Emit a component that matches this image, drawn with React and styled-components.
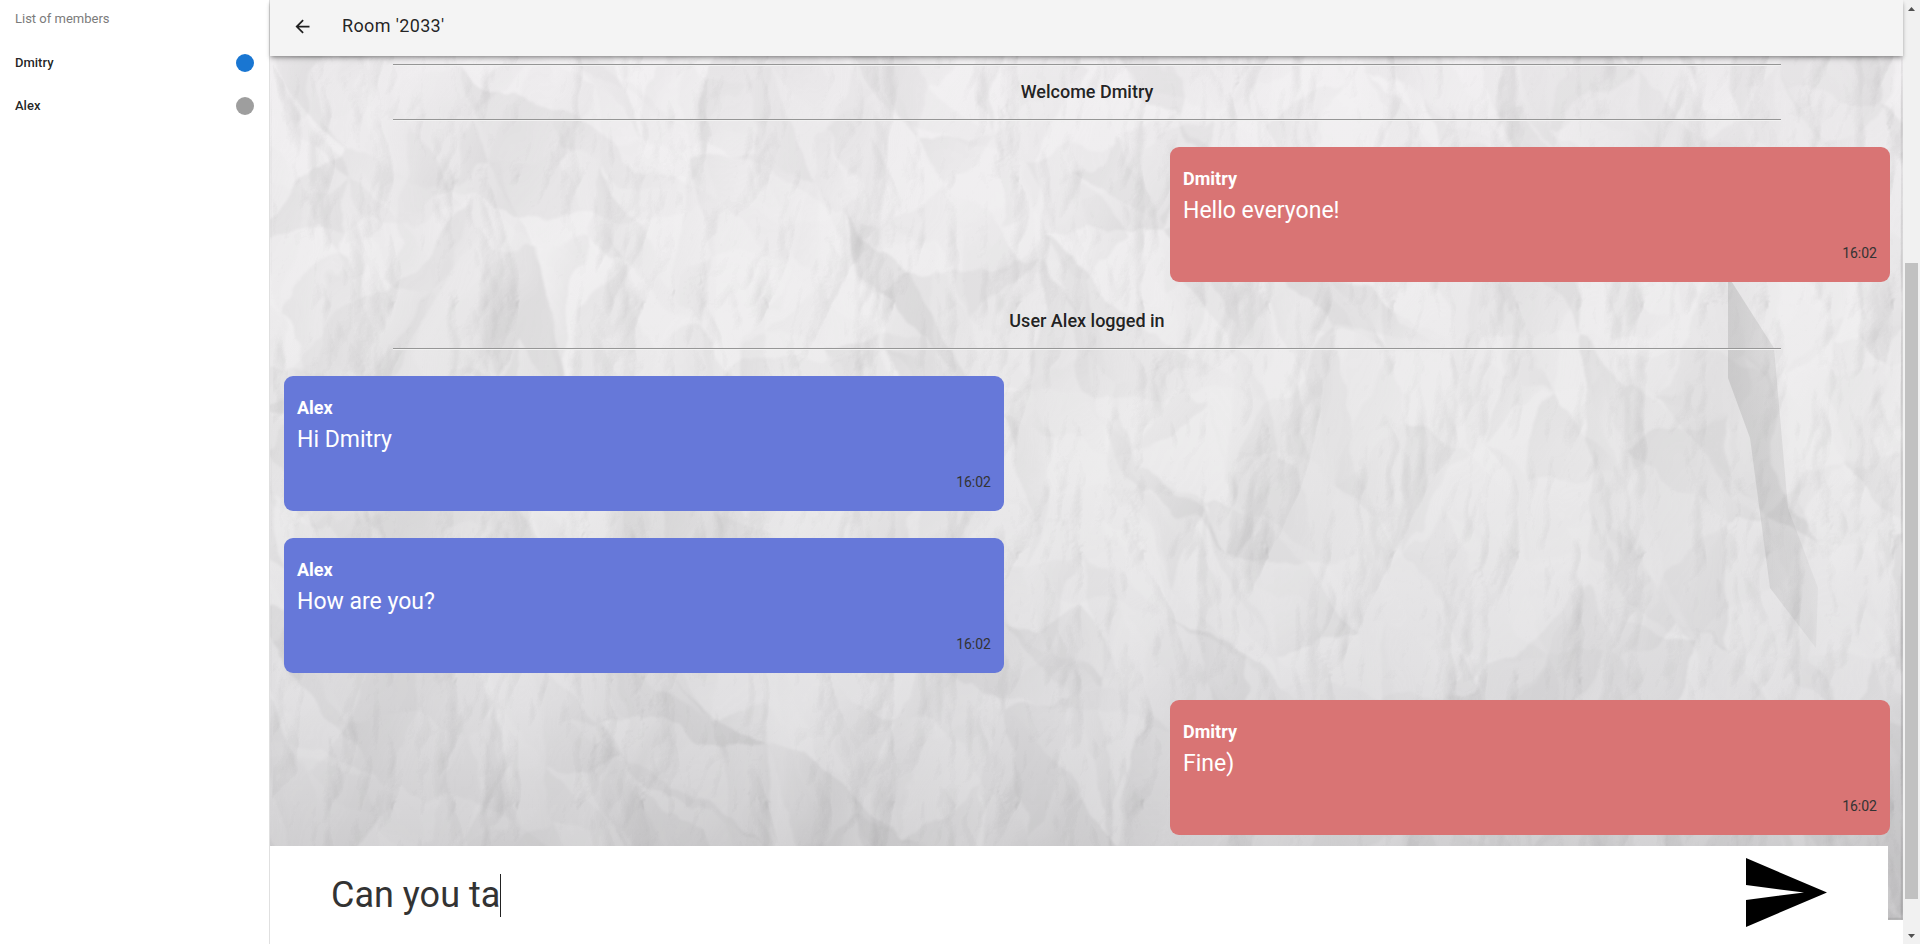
import React, { useState } from "react";
import styled, { createGlobalStyle } from "styled-components";

const GlobalStyle = createGlobalStyle`
  *, *::before, *::after { box-sizing: border-box; }
  body {
    margin: 0;
    background: #fff;
    color: rgba(0, 0, 0, 0.87);
    font-family: Roboto, "Liberation Sans", sans-serif;
  }
`;

const Shell = styled.div`
  display: grid;
  grid-template-columns: 270px minmax(0, 1fr) 17px;
  min-height: 100vh;
`;

const Sidebar = styled.aside`
  border-right: 1px solid #e0e0e0;
  padding: 9px 15px;
  font-size: 13px;
  line-height: 20px;
`;

const SidebarTitle = styled.h2`
  margin: 0 0 12px;
  font-size: inherit;
  font-weight: 400;
  color: #7b7b7b;
`;

const MemberList = styled.ul`
  list-style: none;
  margin: 0;
  padding: 0;
`;

const Member = styled.li`
  display: flex;
  align-items: center;
  justify-content: space-between;
  height: 43px;
  font-weight: 500;
`;

const Status = styled.span`
  width: 18px;
  height: 18px;
  border-radius: 50%;
  background: ${({ $online }) => ($online ? "#1976d2" : "#9e9e9e")};
`;

const Main = styled.main`
  position: relative;
  display: flex;
  flex-direction: column;
  padding-bottom: 24px;
`;

const Toolbar = styled.header`
  position: relative;
  z-index: 1;
  display: flex;
  align-items: center;
  gap: 20px;
  height: 56px;
  padding: 0 20px 4px;
  background: #f4f4f4;
  box-shadow: 0 2px 4px -1px rgba(0, 0, 0, 0.4), 0 4px 5px rgba(0, 0, 0, 0.1);
`;

const BackButton = styled.button`
  display: grid;
  place-items: center;
  width: 32px;
  height: 32px;
  padding: 0 8px 0 0;
  border: 0;
  background: none;
  color: inherit;
`;

const RoomTitle = styled.h1`
  margin: 0;
  font-size: 18px;
  line-height: 24px;
  font-weight: 400;
  letter-spacing: 0.02em;
`;

const Chat = styled.section`
  position: relative;
  isolation: isolate;
  flex: 1;
  padding: 8px 13px 85px 14px;
`;

const Paper = styled.svg`
  position: absolute;
  inset: 0;
  z-index: -1;
  width: 100%;
  height: 100%;
`;

const Messages = styled.div`
  display: flex;
  flex-direction: column;
  gap: 27px;
`;

const Notice = styled.div`
  display: flex;
  flex-direction: column;
  align-items: center;
  gap: 15px;
`;

const NoticeText = styled.p`
  margin: 0;
  font-size: 18px;
  line-height: 24px;
  font-weight: 500;
`;

const Rule = styled.hr`
  width: 86.4%;
  height: 1px;
  margin: 0;
  border: 0;
  background: #969696;
  box-shadow: 0 1px #f2f2f2;
`;

const Card = styled.article`
  display: flex;
  flex-direction: column;
  align-self: ${({ $own }) => ($own ? "flex-end" : "flex-start")};
  width: 37.5vw;
  min-height: 135px;
  padding: 20px 13px 19px;
  border-radius: 9px;
  background: ${({ $own }) => ($own ? "#d97474" : "#6678d9")};
  color: #fff;
`;

const Author = styled.strong`
  font-size: 18px;
  line-height: 24px;
  font-weight: 700;
`;

const Body = styled.p`
  margin: 0;
  font-size: 23px;
  line-height: 40px;
`;

const Time = styled.time`
  margin-top: auto;
  align-self: flex-end;
  font-size: 14px;
  line-height: 20px;
  color: #333;
`;

const Composer = styled.form`
  position: absolute;
  left: 0;
  right: 15px;
  bottom: 0;
  display: flex;
  align-items: center;
  justify-content: space-between;
  height: 98px;
  padding: 0 61px;
  background: #fff;
`;

const Field = styled.label`
  display: flex;
  align-items: center;
  flex: 1;
`;

const TextInput = styled.input`
  field-sizing: content;
  max-width: 100%;
  height: 43px;
  padding: 0;
  border: 0;
  outline: 0;
  background: none;
  color: #333;
  caret-color: transparent;
  font: 400 36px/43px Roboto, "Liberation Sans", sans-serif;
`;

const Caret = styled.span`
  width: 1px;
  height: 43px;
  background: #222;
`;

const SendButton = styled.button`
  display: flex;
  padding: 0 0 5px;
  border: 0;
  background: none;
  color: #000;
`;

const Scrollbar = styled.div`
  display: flex;
  flex-direction: column;
  align-items: center;
  background: #f1f1f1;
`;

const ScrollArrow = styled.span`
  display: grid;
  place-items: center;
  width: 17px;
  height: 17px;
`;

const ScrollTrack = styled.div`
  flex: 1;
  display: grid;
  grid-template-rows: 246fr 636fr 28fr;
  width: 13px;
`;

const ScrollThumb = styled.div`
  grid-row: 2;
  background: #c1c1c1;
`;

const members = [
  { name: "Dmitry", online: true },
  { name: "Alex", online: false },
];

const feed = [
  { notice: "Welcome Dmitry", ruled: true },
  { author: "Dmitry", text: "Hello everyone!", own: true },
  { notice: "User Alex logged in" },
  { author: "Alex", text: "Hi Dmitry" },
  { author: "Alex", text: "How are you?" },
  { author: "Dmitry", text: "Fine)", own: true },
];

// Deterministic random numbers, so the paper looks the same on every render.
function makeRandom(seed) {
  let s = seed;
  return () => {
    s = (s * 1664525 + 1013904223) % 4294967296;
    return s / 4294967296;
  };
}

// Splits the sheet into a jittered mesh of triangles; each one is a facet of the crumpled paper.
function makeFacets(stepX, stepY, seed) {
  const random = makeRandom(seed);
  const cols = Math.ceil(1633 / stepX) + 9;
  const rows = Math.ceil(864 / stepY) + 4;
  const point = [];
  for (let r = 0; r <= rows; r++) {
    point.push([]);
    for (let c = 0; c <= cols; c++) {
      point[r].push([
        Math.round((c - 4.5 + random() * 0.9 + (r - rows / 2) * 0.35) * stepX),
        Math.round((r - 2 + random() * 0.9) * stepY),
      ]);
    }
  }
  const facets = [];
  for (let r = 0; r < rows; r++) {
    for (let c = 0; c < cols; c++) {
      const [a, b, d, e] = [point[r][c], point[r][c + 1], point[r + 1][c], point[r + 1][c + 1]];
      const pair = random() < 0.5 ? [[a, b, e], [a, e, d]] : [[a, b, d], [b, e, d]];
      for (const triangle of pair) {
        facets.push({
          d: "M" + triangle.map((p) => p.join(" ")).join("L") + "Z",
          tone: Math.floor(random() * 6),
        });
      }
    }
  }
  return facets;
}

const largeFacets = makeFacets(130, 130, 41);
const smallFacets = makeFacets(50, 90, 97);

const tones = [
  ["#fff", 0.4, 0],
  ["#777", 0.24, 0],
  ["#fff", 0, 0.35],
  ["#777", 0, 0.24],
  ["#777", 0.12, 0],
  ["#fff", 0.2, 0.05],
];

function PaperBackground() {
  return (
    <Paper viewBox="0 0 1633 864" preserveAspectRatio="none" aria-hidden="true">
      <defs>
        <linearGradient id="shade" x1="0" y1="0" x2="0" y2="1">
          <stop offset="0" stopColor="#f0eef0" />
          <stop offset="0.45" stopColor="#eae9ea" />
          <stop offset="0.75" stopColor="#dedddf" />
          <stop offset="1" stopColor="#c8c7c9" />
        </linearGradient>
        {tones.map(([color, start, end], i) => (
          <linearGradient key={i} id={`tone${i}`} x1="0" y1="0.2" x2="1" y2="0.8">
            <stop offset="0" stopColor={color} stopOpacity={start} />
            <stop offset="1" stopColor={color} stopOpacity={end} />
          </linearGradient>
        ))}
        <linearGradient id="fold" x1="0" y1="0" x2="1" y2="0">
          <stop offset="0" stopColor="#888" stopOpacity="0.26" />
          <stop offset="1" stopColor="#888" stopOpacity="0.08" />
        </linearGradient>
        <filter id="bend" filterUnits="userSpaceOnUse" x="-80" y="-80" width="1793" height="1024" colorInterpolationFilters="sRGB">
          <feTurbulence type="fractalNoise" baseFrequency="0.012 0.008" numOctaves="4" seed="5" result="noise" />
          <feDisplacementMap in="SourceGraphic" in2="noise" scale="55" xChannelSelector="R" yChannelSelector="G" />
          <feGaussianBlur stdDeviation="1" />
        </filter>
        <filter id="grain" x="0" y="0" width="100%" height="100%" colorInterpolationFilters="sRGB">
          <feTurbulence type="turbulence" baseFrequency="0.008 0.004" numOctaves="4" seed="12" />
          <feColorMatrix values="0 0 0 0 0  0 0 0 0 0  0 0 0 0 0  0.7 0.4 0 0 0" />
          <feGaussianBlur stdDeviation="1" />
          <feDiffuseLighting surfaceScale="14" diffuseConstant="0.57" lightingColor="#fff">
            <feDistantLight azimuth="215" elevation="60" />
          </feDiffuseLighting>
        </filter>
      </defs>
      <rect width="1633" height="864" fill="url(#shade)" />
      <g filter="url(#bend)" opacity="0.45">
        {largeFacets.map((f, i) => (
          <path key={`l${i}`} d={f.d} fill={`url(#tone${f.tone})`} />
        ))}
        <g opacity="0.7">
          {smallFacets.map((f, i) => (
            <path key={`s${i}`} d={f.d} fill={`url(#tone${f.tone})`} />
          ))}
        </g>
      </g>
      <rect width="1633" height="864" filter="url(#grain)" opacity="0.14" style={{ mixBlendMode: "hard-light" }} />
      <path d="M1458 220l46 72 14 160 30 80-2 60-46-60-20-150-22-60z" fill="url(#fold)" />
    </Paper>
  );
}

export default function App() {
  const [draft, setDraft] = useState("Can you ta");
  return (
    <>
      <GlobalStyle />
      <Shell>
        <Sidebar>
          <SidebarTitle>List of members</SidebarTitle>
          <MemberList>
            {members.map((m) => (
              <Member key={m.name}>
                {m.name}
                <Status $online={m.online} />
              </Member>
            ))}
          </MemberList>
        </Sidebar>
        <Main>
          <Toolbar>
            <BackButton type="button" aria-label="Back">
              <svg width="21" height="21" viewBox="0 0 24 24" fill="currentColor">
                <path d="M20 11H7.83l5.59-5.59L12 4l-8 8 8 8 1.41-1.41L7.83 13H20v-2z" />
              </svg>
            </BackButton>
            <RoomTitle>Room '2033'</RoomTitle>
          </Toolbar>
          <Chat>
            <PaperBackground />
            <Messages>
              {feed.map((item, i) =>
                item.notice ? (
                  <Notice key={i}>
                    {item.ruled && <Rule />}
                    <NoticeText>{item.notice}</NoticeText>
                    <Rule />
                  </Notice>
                ) : (
                  <Card key={i} $own={item.own}>
                    <Author>{item.author}</Author>
                    <Body>{item.text}</Body>
                    <Time>16:02</Time>
                  </Card>
                )
              )}
            </Messages>
          </Chat>
          <Composer onSubmit={(e) => e.preventDefault()}>
            <Field>
              <TextInput aria-label="Message" value={draft} onChange={(e) => setDraft(e.target.value)} />
              <Caret />
            </Field>
            <SendButton type="submit" aria-label="Send">
              <svg width="81" height="69" viewBox="0 0 81 69" fill="currentColor">
                <path d="M0 0L81 34.5 0 69V42L58 34.5 0 27z" />
              </svg>
            </SendButton>
          </Composer>
        </Main>
        <Scrollbar aria-hidden="true">
          <ScrollArrow>
            <svg width="7" height="4" viewBox="0 0 7 4" fill="#505050">
              <path d="M3.500 0L7 4H0z" />
            </svg>
          </ScrollArrow>
          <ScrollTrack>
            <ScrollThumb />
          </ScrollTrack>
          <ScrollArrow>
            <svg width="7" height="4" viewBox="0 0 7 4" fill="#505050">
              <path d="M0 0h7L3.500 4z" />
            </svg>
          </ScrollArrow>
        </Scrollbar>
      </Shell>
    </>
  );
}
